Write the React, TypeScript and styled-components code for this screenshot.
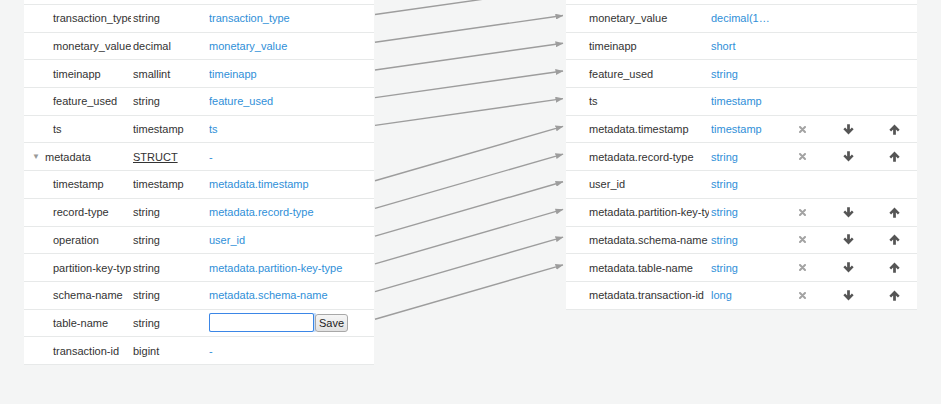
import React from 'react';
import styled, { createGlobalStyle } from 'styled-components';

const ROW_H = 27.7;

type SourceField = {
  name: string;
  type: string;
  target?: string;
  struct?: boolean;
  editing?: boolean;
};

type TargetField = {
  name: string;
  type: string;
  movable?: boolean;
};

// first row is scrolled out of view, so it is left without labels
const sourceFields: SourceField[] = [
  { name: '', type: '', target: '' },
  { name: 'transaction_type', type: 'string', target: 'transaction_type' },
  { name: 'monetary_value', type: 'decimal', target: 'monetary_value' },
  { name: 'timeinapp', type: 'smallint', target: 'timeinapp' },
  { name: 'feature_used', type: 'string', target: 'feature_used' },
  { name: 'ts', type: 'timestamp', target: 'ts' },
  { name: 'metadata', type: 'STRUCT', struct: true },
  { name: 'timestamp', type: 'timestamp', target: 'metadata.timestamp' },
  { name: 'record-type', type: 'string', target: 'metadata.record-type' },
  { name: 'operation', type: 'string', target: 'user_id' },
  { name: 'partition-key-type', type: 'string', target: 'metadata.partition-key-type' },
  { name: 'schema-name', type: 'string', target: 'metadata.schema-name' },
  { name: 'table-name', type: 'string', editing: true },
  { name: 'transaction-id', type: 'bigint' },
];

const targetFields: TargetField[] = [
  { name: '', type: '' },
  { name: 'monetary_value', type: 'decimal(10,2)' },
  { name: 'timeinapp', type: 'short' },
  { name: 'feature_used', type: 'string' },
  { name: 'ts', type: 'timestamp' },
  { name: 'metadata.timestamp', type: 'timestamp', movable: true },
  { name: 'metadata.record-type', type: 'string', movable: true },
  { name: 'user_id', type: 'string' },
  { name: 'metadata.partition-key-type', type: 'string', movable: true },
  { name: 'metadata.schema-name', type: 'string', movable: true },
  { name: 'metadata.table-name', type: 'string', movable: true },
  { name: 'metadata.transaction-id', type: 'long', movable: true },
];

// source row index -> target row index
const links: [number, number][] = [
  [1, 0],
  [2, 1],
  [3, 2],
  [4, 3],
  [5, 4],
  [7, 5],
  [8, 6],
  [9, 7],
  [10, 8],
  [11, 9],
  [12, 10],
];

const GlobalStyle = createGlobalStyle`
  *, *::before, *::after {
    box-sizing: border-box;
  }
  html, body {
    margin: 0;
    background: #f4f5f5;
  }
  body {
    font-family: "Liberation Sans", Arial, Helvetica, sans-serif;
    font-size: 11px;
    color: #333;
    overflow: hidden;
  }
`;

// the view is scrolled so the first row only peeks in at the top
const Page = styled.div`
  display: flex;
  align-items: flex-start;
  padding-left: 24px;
  margin-top: -${ROW_H - 5}px;
`;

const Panel = styled.div<{ $width: number }>`
  width: ${p => p.$width}px;
  background: #fff;
  flex-shrink: 0;
`;

const Row = styled.div`
  height: ${ROW_H}px;
  border-bottom: 1px solid #e7e9e9;
  display: flex;
  align-items: center;
`;

const Caret = styled.span`
  width: 21px;
  padding-left: 8px;
  color: #999;
  font-size: 8px;
  flex-shrink: 0;
`;

// clipped at its right edge, with a small gap before the next column
const NameCell = styled.div<{ $width: number; $indent: number }>`
  width: ${p => p.$width - 2}px;
  margin-right: 2px;
  padding-left: ${p => p.$indent}px;
  flex-shrink: 0;
  white-space: nowrap;
  overflow: hidden;
`;

const TypeCell = styled.div<{ $width: number; $link?: boolean; $struct?: boolean }>`
  width: ${p => p.$width}px;
  flex-shrink: 0;
  white-space: nowrap;
  overflow: hidden;
  text-overflow: ellipsis;
  color: ${p => (p.$link ? '#2f8fd8' : '#333')};
  text-decoration: ${p => (p.$struct ? 'underline' : 'none')};
`;

const MapCell = styled.div`
  flex: 1;
  display: flex;
  align-items: center;
  color: #2f8fd8;
  white-space: nowrap;
  overflow: hidden;
`;

const NameInput = styled.input`
  width: 105px;
  height: 19px;
  margin: 0;
  padding: 0 3px;
  border: 1px solid #3b86e6;
  border-radius: 2px;
  box-shadow: 0 0 0 2px rgba(110, 170, 240, 0.4);
  outline: none;
  font-family: inherit;
  font-size: 11px;
`;

const SaveButton = styled.button`
  height: 18px;
  margin: 0 0 0 1px;
  padding: 0 3px;
  border: 1px solid #a8a8a8;
  border-radius: 3px;
  background: linear-gradient(#f6f6f6, #e2e2e2);
  font-family: inherit;
  font-size: 11px;
  color: #222;
`;

const Actions = styled.div`
  display: flex;
  margin-left: 8px;
`;

const ActionCell = styled.div`
  width: 46px;
  flex-shrink: 0;
  display: flex;
  justify-content: center;
  align-items: center;
`;

const Connector = styled.svg`
  display: block;
  flex-shrink: 0;
`;

const RemoveIcon = () => (
  <svg width="7" height="7" viewBox="0 0 7 7">
    <path d="M1 1 L6 6 M6 1 L1 6" stroke="#a3a3a3" strokeWidth="2" strokeLinecap="round" />
  </svg>
);

const ArrowIcon = ({ down }: { down?: boolean }) => (
  <svg
    width="11"
    height="11"
    viewBox="0 0 12 12"
    style={{ transform: down ? 'rotate(180deg)' : undefined }}
  >
    <path
      d="M6 0.6 L11.6 6.2 L9.7 8.1 L7.5 5.9 V11.6 H4.5 V5.9 L2.3 8.1 L0.4 6.2 Z"
      fill="#555"
      strokeLinejoin="round"
    />
  </svg>
);

const SourcePanel = () => (
  <Panel $width={350}>
    {sourceFields.map((f, i) => (
      <Row key={i}>
        {f.struct ? (
          <>
            <Caret>▼</Caret>
            <NameCell $width={88} $indent={0}>{f.name}</NameCell>
          </>
        ) : (
          <NameCell $width={109} $indent={29}>{f.name}</NameCell>
        )}
        <TypeCell $width={76} $struct={f.struct}>{f.type}</TypeCell>
        <MapCell>
          {f.editing ? (
            <>
              <NameInput autoFocus defaultValue="" />
              <SaveButton>Save</SaveButton>
            </>
          ) : (
            f.target ?? '-'
          )}
        </MapCell>
      </Row>
    ))}
  </Panel>
);

const TargetPanel = () => (
  <Panel $width={351}>
    {targetFields.map((f, i) => (
      <Row key={i}>
        <NameCell $width={145} $indent={23}>{f.name}</NameCell>
        <TypeCell $width={60} $link>{f.type}</TypeCell>
        {f.movable && (
          <Actions>
            <ActionCell><RemoveIcon /></ActionCell>
            <ActionCell><ArrowIcon down /></ActionCell>
            <ActionCell><ArrowIcon /></ActionCell>
          </Actions>
        )}
      </Row>
    ))}
  </Panel>
);

const MappingLines = () => {
  const width = 192;
  const height = sourceFields.length * ROW_H;
  const mid = (i: number) => ROW_H * (i + 0.5);
  return (
    <Connector width={width} height={height}>
      <defs>
        <marker id="head" markerWidth="8" markerHeight="6" refX="7.5" refY="3" orient="auto" markerUnits="userSpaceOnUse">
          <path d="M0 0 L8 3 L0 6 Z" fill="#9d9d9d" />
        </marker>
      </defs>
      {links.map(([from, to], k) => (
        <line
          key={k}
          x1={1}
          y1={mid(from) - 4}
          x2={189}
          y2={mid(to) - 3}
          stroke="#9d9d9d"
          strokeWidth="1.4"
          markerEnd="url(#head)"
        />
      ))}
    </Connector>
  );
};

export default function App() {
  return (
    <>
      <GlobalStyle />
      <Page>
        <SourcePanel />
        <MappingLines />
        <TargetPanel />
      </Page>
    </>
  );
}
